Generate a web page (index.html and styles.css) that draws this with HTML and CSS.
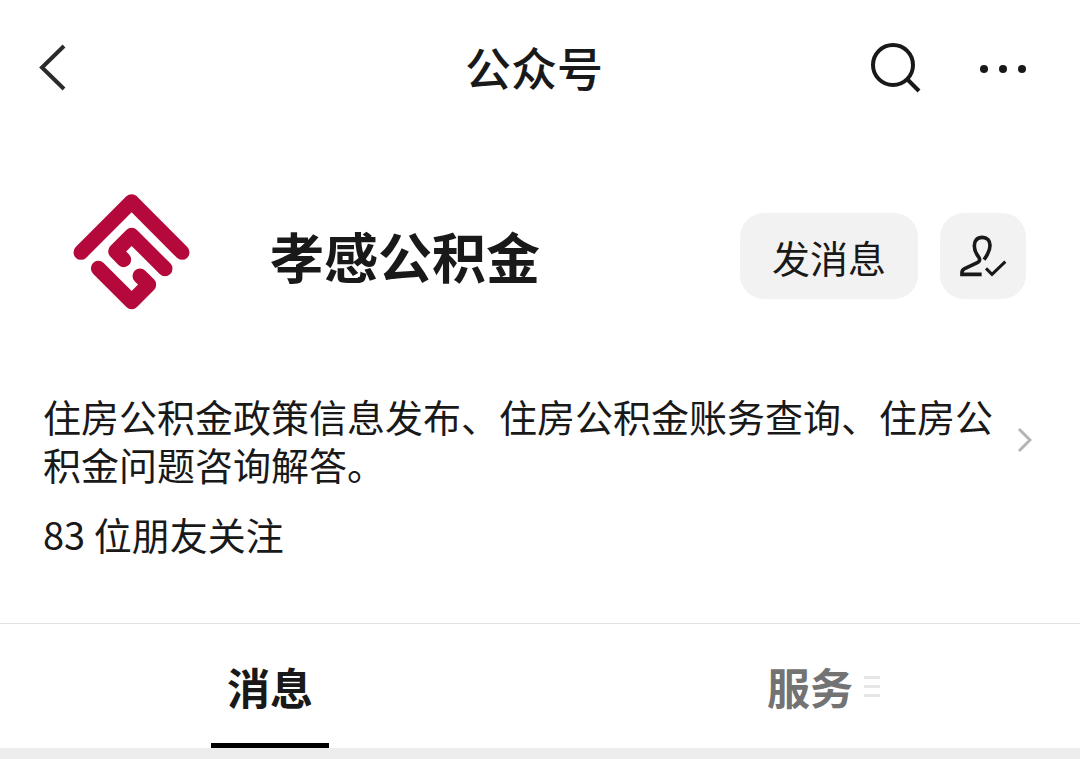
FILE: index.html
```html
<!DOCTYPE html>
<html lang="zh-CN">
<head>
    <meta charset="UTF-8">
    <meta name="viewport" content="width=device-width, initial-scale=1.0">
    <title>公众号</title>
    <link rel="stylesheet" href="styles.css">
</head>
<body>
    <header class="navbar">
        <button type="button" class="icon-button" aria-label="返回">
            <svg width="32" height="48" viewBox="0 0 32 48" fill="none" stroke="#2b2b2b" stroke-width="4">
                <path d="M26 2L4 23.500L26 45"/>
            </svg>
        </button>
        <h1>公众号</h1>
        <div class="navbar-actions">
            <button type="button" class="icon-button" aria-label="搜索">
                <svg width="52" height="52" viewBox="0 0 52 52" fill="none" stroke="#191919" stroke-width="4">
                    <circle cx="24" cy="23" r="20"/>
                    <path d="M38.500 37.500L50 49"/>
                </svg>
            </button>
            <button type="button" class="icon-button" aria-label="更多">
                <svg width="52" height="52" viewBox="0 0 52 52" fill="#191919">
                    <circle cx="6" cy="27" r="4"/>
                    <circle cx="25" cy="27" r="4"/>
                    <circle cx="44" cy="27" r="4"/>
                </svg>
            </button>
        </div>
    </header>

    <main>
        <section class="profile">
            <svg class="logo" viewBox="63 36 360 360" fill="none" stroke="#b5093c" stroke-width="45" stroke-linecap="round" stroke-linejoin="round" role="img" aria-label="孝感公积金">
                <path d="M93 217L245 65L396 217"/>
                <path d="M221 239L197 214L245 166L345 266"/>
                <path d="M145 265L245 365L296 314L270 288"/>
            </svg>
            <h2>孝感公积金</h2>
            <div class="profile-actions">
                <button type="button" class="message-button">发消息</button>
                <button type="button" class="follow-button" aria-label="已关注">
                    <svg width="48" height="48" viewBox="690 96 144 144" fill="none" stroke="#191919" stroke-width="11">
                        <path d="M765 179C777 163 783 149 783 136C783 121 774 112 760 112C745 112 736 122 736 137C736 151 741 161 749 171C754 178 752 185 745 188L707 206Q699 210 699 217V223H758"/>
                        <path d="M771 205L789 223L829 185" stroke-width="9"/>
                    </svg>
                </button>
            </div>
        </section>

        <section class="about">
            <a href="#" class="description">
                <span>住房公积金政策信息发布、住房公积金账务查询、住房公积金问题咨询解答。</span>
                <svg width="16" height="26" viewBox="0 0 16 26" fill="none" stroke="#b5b5b5" stroke-width="3">
                    <path d="M3 2L14 13L3 24"/>
                </svg>
            </a>
            <p class="friends">83 位朋友关注</p>
        </section>

        <nav class="tabs">
            <a href="#" class="tab active">消息</a>
            <a href="#" class="tab">
                <span class="tab-label">服务
                    <svg class="tab-menu" width="16" height="22" viewBox="0 0 16 22" fill="#e6e6e6">
                        <rect width="16" height="3" y="1"/>
                        <rect width="16" height="3" y="10"/>
                        <rect width="16" height="3" y="19"/>
                    </svg>
                </span>
            </a>
        </nav>
    </main>
</body>
</html>
```
FILE: styles.css
```css
* {
    box-sizing: border-box;
}

body {
    margin: 0;
    min-height: 100vh;
    display: flex;
    flex-direction: column;
    font-family: "Noto Sans CJK SC", sans-serif;
    color: #191919;
    background-color: #ededed;
}

h1, h2, p {
    margin: 0;
}

button {
    font-family: inherit;
    color: inherit;
    border: none;
    padding: 0;
    cursor: pointer;
}

a {
    color: inherit;
    text-decoration: none;
}

svg {
    display: block;
    flex-shrink: 0;
}

main {
    background-color: #fff;
}

.navbar {
    display: grid;
    grid-template-columns: 1fr auto 1fr;
    align-items: center;
    height: 136px;
    padding: 0 50px 0 38px;
    background-color: #fff;
}

.navbar h1 {
    padding-bottom: 4px;
    font-size: 46px;
    font-weight: 500;
    line-height: 64px;
}

.icon-button {
    background: none;
    justify-self: start;
}

.navbar-actions {
    display: flex;
    justify-content: flex-end;
    gap: 57px;
}

.profile {
    display: flex;
    align-items: center;
    padding: 56px 54px 56px 71px;
}

.logo {
    width: 120px;
    height: 120px;
}

.profile h2 {
    flex: 1;
    margin-left: 79px;
    padding-top: 8px;
    font-size: 54px;
    font-weight: 700;
    line-height: 72px;
}

.profile-actions {
    display: flex;
    gap: 22px;
    padding-top: 8px;
}

.profile-actions button {
    display: flex;
    align-items: center;
    justify-content: center;
    height: 86px;
    border-radius: 24px;
    background-color: #f2f2f2;
}

.message-button {
    width: 178px;
    font-size: 38px;
}

.follow-button {
    width: 86px;
}

.about {
    padding: 24px 48px 65px 43px;
    font-size: 38px;
    line-height: 48px;
}

.description {
    display: flex;
    align-items: center;
    justify-content: space-between;
    gap: 20px;
}

.friends {
    margin-top: 22px;
}

.tabs {
    display: grid;
    grid-template-columns: 1fr 1fr;
    border-top: 1px solid #e2e2e2;
}

.tab {
    position: relative;
    height: 124px;
    font-size: 43px;
    font-weight: 700;
    line-height: 124px;
    text-align: center;
    color: #737373;
}

.tab.active {
    color: #191919;
}

.tab.active::after {
    content: "";
    position: absolute;
    left: 50%;
    bottom: 0;
    width: 118px;
    height: 5px;
    margin-left: -59px;
    background-color: #000;
}

.tab-label {
    position: relative;
}

.tab-menu {
    position: absolute;
    top: 50%;
    left: 100%;
    margin: -11px 0 0 11px;
}
```
